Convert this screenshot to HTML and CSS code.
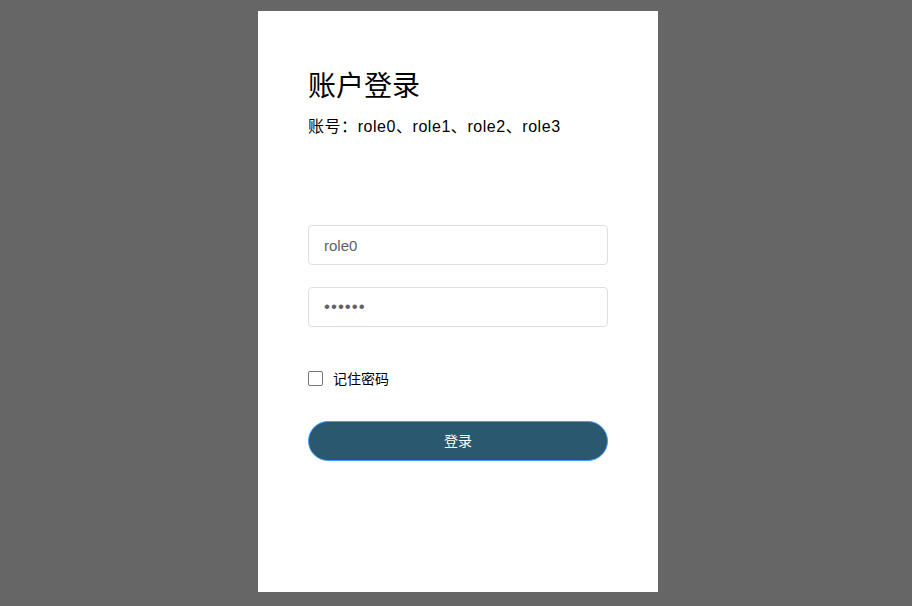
FILE: index.html
```html
<!DOCTYPE html>
<html lang="zh">
<head>
<meta charset="utf-8">
<link rel="stylesheet" href="styles.css">
</head>
<body>
<div class="page">
  <div class="card">
    <h1 class="title">账户登录</h1>
    <p class="sub">账号：role0、role1、role2、role3</p>
    <div class="field"><input class="input" type="text" value="role0"></div>
    <div class="field second"><input class="input pass" type="password" value="123456"></div>
    <label class="remember"><span class="box"></span><span class="rtext">记住密码</span></label>
    <button class="btn">登录</button>
  </div>
</div>
</body>
</html>
```
FILE: styles.css
```css
html, body { margin: 0; padding: 0; }
body {
  background: #666666;
  font-family: "Liberation Sans", "Noto Sans CJK SC", sans-serif;
  width: 912px;
  height: 606px;
  overflow: hidden;
}
.page {
  display: flex;
  justify-content: center;
  padding-top: 11px;
  padding-left: 4px;
}
.card {
  width: 400px;
  height: 581px;
  background: #fff;
  box-sizing: border-box;
  padding: 55px 50px 0 50px;
  display: flex;
  flex-direction: column;
}
.title {
  margin: 0;
  font-size: 28px;
  font-weight: normal;
  line-height: 42px;
  color: #000;
}
.sub {
  margin: 7px 0 0 0;
  font-size: 16px;
  line-height: 24px;
  letter-spacing: 0.55px;
  color: #000;
}
.field { margin-top: 86px; }
.field.second { margin-top: 22px; }
.input {
  display: block;
  width: 300px;
  height: 40px;
  box-sizing: border-box;
  border: 1px solid #dcdfe6;
  border-radius: 4px;
  padding: 0 15px;
  font-family: "Liberation Sans", "Noto Sans CJK SC", sans-serif;
  font-size: 15px;
  color: #606266;
  outline: none;
}
.input.pass {
  font-size: 17px;
  letter-spacing: 1px;
}
.remember {
  margin-top: 41px;
  height: 20px;
  display: flex;
  align-items: center;
}
.box {
  width: 13px;
  height: 13px;
  border: 1px solid #767676;
  border-radius: 2px;
  background: #fff;
}
.rtext {
  margin-left: 10px;
  font-size: 14px;
  color: #000;
}
.btn {
  margin-top: 33px;
  width: 300px;
  height: 40px;
  border: 1px solid #409eff;
  border-radius: 20px;
  background: #2a586f;
  color: #fff;
  font-family: "Liberation Sans", "Noto Sans CJK SC", sans-serif;
  font-size: 14px;
  padding: 0 0 3px 0;
}
```
